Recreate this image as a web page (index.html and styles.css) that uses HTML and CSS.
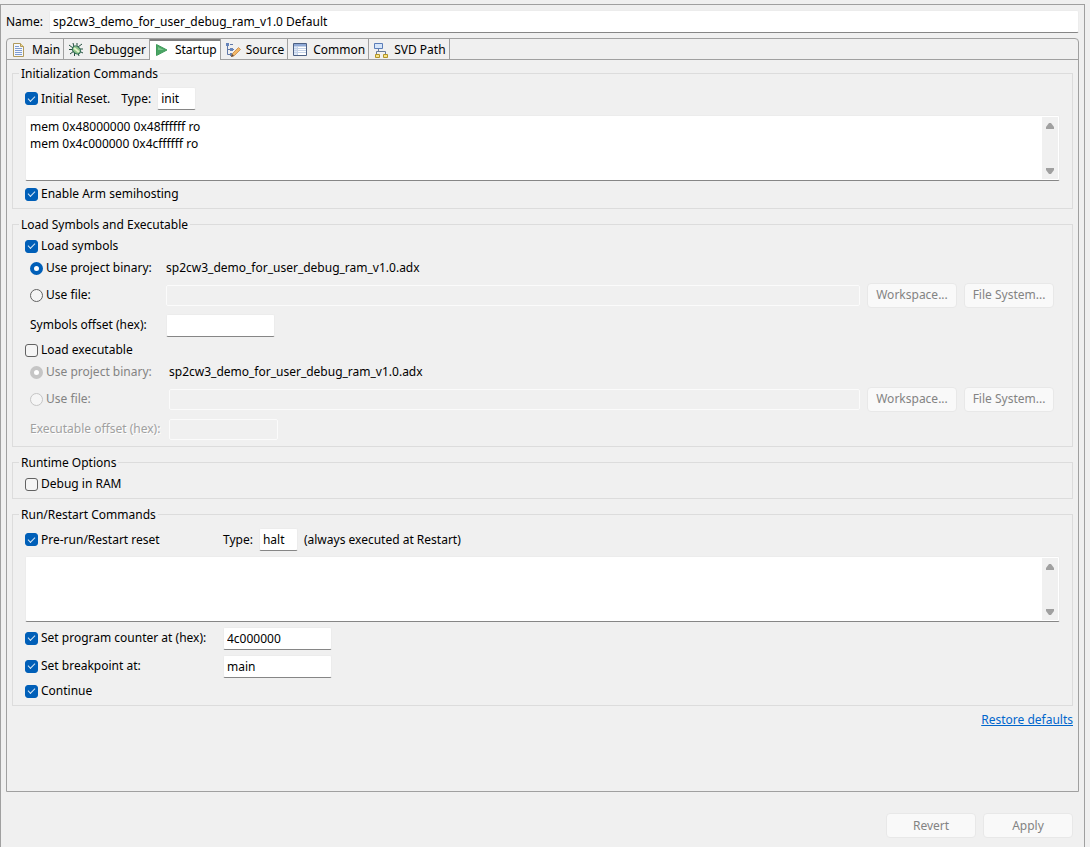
FILE: index.html
```html
<!DOCTYPE html>
<html lang="en">
<head>
    <meta charset="UTF-8">
    <meta name="viewport" content="width=device-width, initial-scale=1.0">
    <title>Debug Configuration</title>
    <link rel="stylesheet" href="styles.css">
</head>
<body>
    <main class="config">
        <div class="name-row">
            <label for="name">Name:</label>
            <input type="text" id="name" class="field" value="sp2cw3_demo_for_user_debug_ram_v1.0 Default">
        </div>

        <div class="folder">
            <div class="tabs" role="tablist">
                <button class="tab" role="tab">
                    <svg width="16" height="16" viewBox="0 0 16 16">
                        <path d="M2.5 1.5h7l3 3v10h-10z" fill="#f4f8ff" stroke="#b09a5c"/>
                        <path d="M9.5 1.5v3h3" fill="#f0d88c" stroke="#b09a5c"/>
                        <path d="M4 4.5h4M4 6.5h7M4 8.5h7M4 10.5h7M4 12.5h7" stroke="#7f9cd0"/>
                    </svg>
                    Main
                </button>
                <button class="tab" role="tab">
                    <svg width="16" height="16" viewBox="0 0 16 16">
                        <path d="M5 1l1 4M9 1v4M1 3l4 3M1 7.500h4M2 12l4-3M6.500 10v4M10 11l1 3M11 9l4 2M11 7h4M10 5l4-3" fill="none" stroke="#24503f"/>
                        <ellipse cx="8.500" cy="8" rx="4.500" ry="3.500" transform="rotate(40 8.500 8)" fill="#8fc58a" stroke="#2c6653"/>
                        <path d="M6 6l5 4" stroke="#e4f5cf" stroke-width="2"/>
                    </svg>
                    Debugger
                </button>
                <button class="tab active" role="tab" aria-selected="true">
                    <svg width="16" height="16" viewBox="0 0 16 16">
                        <path d="M2.5 2.5L13 8L2.5 13.5z" fill="#4aa564" stroke="#3f9a5a"/>
                        <path d="M4 5l6 3H4z" fill="#7cc48c"/>
                    </svg>
                    Startup
                </button>
                <button class="tab" role="tab">
                    <svg width="16" height="16" viewBox="0 0 16 16">
                        <path d="M2.5 3v9.500H6M2.5 7.500H6M5 2.500h3M8 7.500h1" fill="none" stroke="#6078a8"/>
                        <path d="M1 1h3v3H1zM5 6h3v3H5zM5 11h3v3H5z" fill="#6483ba"/>
                        <path d="M6.5 14.500l1-3l6-6l2 2l-6 6z" fill="#f2b868" stroke="#cf9558"/>
                        <path d="M6 15l1-3l2 2z" fill="#5c4a3c"/>
                    </svg>
                    Source
                </button>
                <button class="tab" role="tab">
                    <svg width="16" height="16" viewBox="0 0 16 16">
                        <path d="M1.5 1.5h13v12h-13z" fill="#fff" stroke="#4d6185"/>
                        <path d="M2 2h12v2H2z" fill="#8fa9d6"/>
                        <path d="M2 4h3v9H2z" fill="#dce7f7"/>
                        <path d="M2 4.5h12M5.5 4v9M2 6.5h12M2 8.5h12M2 10.5h12" stroke="#c4d2e8"/>
                    </svg>
                    Common
                </button>
                <button class="tab" role="tab">
                    <svg width="16" height="16" viewBox="0 0 16 16">
                        <path d="M5.5 6v3.500M3.5 12V9.5h9V12" fill="none" stroke="#6b7c99"/>
                        <path d="M1.5 1.5h8v5h-8z" fill="#d5e5fa" stroke="#5b7db8"/>
                        <path d="M2.5 12.5h4v3h-4zM10.5 12.5h4v3h-4z" fill="#f6e488" stroke="#b39325"/>
                    </svg>
                    SVD Path
                </button>
            </div>

            <div class="page">
                <fieldset class="group">
                    <legend>Initialization Commands</legend>
                    <div class="row">
                        <label class="check"><input type="checkbox" checked>Initial Reset.</label>
                        <label for="init-type" class="type-label">Type:</label>
                        <input type="text" id="init-type" class="field tiny" value="init">
                    </div>
                    <div class="commands">
                        <textarea aria-label="Initialization commands">mem 0x48000000 0x48ffffff ro
mem 0x4c000000 0x4cffffff ro</textarea>
                        <div class="scroll">
                            <svg width="8" height="6" viewBox="0 0 8 6"><path d="M3 0h2l3 4v2H0V4z"/></svg>
                            <svg width="8" height="6" viewBox="0 0 8 6"><path d="M0 0h8v2L5 6H3L0 2z"/></svg>
                        </div>
                    </div>
                    <label class="check semihosting"><input type="checkbox" checked>Enable Arm semihosting</label>
                </fieldset>

                <fieldset class="group">
                    <legend>Load Symbols and Executable</legend>
                    <label class="check"><input type="checkbox" checked>Load symbols</label>
                    <div class="grid">
                        <label class="check"><input type="radio" name="symbols" checked>Use project binary:</label>
                        <span class="wide">sp2cw3_demo_for_user_debug_ram_v1.0.adx</span>
                        <label class="check"><input type="radio" name="symbols">Use file:</label>
                        <input type="text" class="field" aria-label="Symbols file" disabled>
                        <button class="btn" disabled>Workspace...</button>
                        <button class="btn" disabled>File System...</button>
                        <label for="sym-offset">Symbols offset (hex):</label>
                        <input type="text" id="sym-offset" class="field short">
                    </div>
                    <label class="check"><input type="checkbox">Load executable</label>
                    <div class="grid executable">
                        <label class="check disabled"><input type="radio" name="executable" checked disabled>Use project binary:</label>
                        <span class="wide">sp2cw3_demo_for_user_debug_ram_v1.0.adx</span>
                        <label class="check disabled"><input type="radio" name="executable" disabled>Use file:</label>
                        <input type="text" class="field" aria-label="Executable file" disabled>
                        <button class="btn" disabled>Workspace...</button>
                        <button class="btn" disabled>File System...</button>
                        <label for="exe-offset" class="etched">Executable offset (hex):</label>
                        <input type="text" id="exe-offset" class="field short" disabled>
                    </div>
                </fieldset>

                <fieldset class="group">
                    <legend>Runtime Options</legend>
                    <label class="check"><input type="checkbox">Debug in RAM</label>
                </fieldset>

                <fieldset class="group">
                    <legend>Run/Restart Commands</legend>
                    <div class="row">
                        <label class="check run-label"><input type="checkbox" checked>Pre-run/Restart reset</label>
                        <label for="run-type">Type:</label>
                        <input type="text" id="run-type" class="field tiny" value="halt">
                        <span>(always executed at Restart)</span>
                    </div>
                    <div class="commands">
                        <textarea aria-label="Run commands"></textarea>
                        <div class="scroll">
                            <svg width="8" height="6" viewBox="0 0 8 6"><path d="M3 0h2l3 4v2H0V4z"/></svg>
                            <svg width="8" height="6" viewBox="0 0 8 6"><path d="M0 0h8v2L5 6H3L0 2z"/></svg>
                        </div>
                    </div>
                    <div class="row option">
                        <label class="check run-label"><input type="checkbox" checked>Set program counter at (hex):</label>
                        <input type="text" class="field short" aria-label="Program counter" value="4c000000">
                    </div>
                    <div class="row option">
                        <label class="check run-label"><input type="checkbox" checked>Set breakpoint at:</label>
                        <input type="text" class="field short" aria-label="Breakpoint" value="main">
                    </div>
                    <label class="check"><input type="checkbox" checked>Continue</label>
                </fieldset>

                <a href="#" class="restore">Restore defaults</a>
            </div>
        </div>

        <div class="actions">
            <button class="btn" disabled>Revert</button>
            <button class="btn" disabled>Apply</button>
        </div>
    </main>
</body>
</html>
```
FILE: styles.css
```css
* {
    box-sizing: border-box;
}

body {
    margin: 0;
    padding: 4px 5px 0 0;
    min-height: 100vh;
    display: flex;
    background: #f0f0f0;
    color: #000;
    font-family: "Noto Sans", "Open Sans", sans-serif;
    font-size: 12px;
    line-height: 16px;
}

input, button, textarea {
    font: inherit;
    color: inherit;
    margin: 0;
}

.config {
    flex: 1;
    min-width: 0;
    display: flex;
    flex-direction: column;
    padding: 5px 5px 9px;
    border: 1px solid #a0a0a0;
    border-bottom: none;
}

.name-row {
    display: flex;
    align-items: center;
    gap: 6px;
}

.name-row .field {
    flex: 1;
}

.field {
    height: 23px;
    min-width: 0;
    padding: 0 3px;
    background: #fff;
    border: 1px solid #ececec;
    border-bottom-color: #868686;
    border-radius: 2px;
    outline: none;
}

.field:disabled {
    height: 21px;
    background: #f0f0f0;
    border-color: #fbfbfb;
}

.tiny {
    width: 39px;
}

.short {
    width: 109px;
}

.folder {
    flex: 1;
    display: flex;
    flex-direction: column;
    margin-top: 5px;
    border: 1px solid #a0a0a0;
    border-radius: 4px 4px 0 0;
}

.tabs {
    display: flex;
    height: 21px;
    border-bottom: 1px solid #a0a0a0;
}

.tab {
    display: flex;
    align-items: center;
    gap: 5px;
    height: 20px;
    padding: 2px 3px 0 4px;
    background: none;
    border: none;
    border-right: 1px solid #a0a0a0;
    white-space: nowrap;
}

.tab.active {
    height: 21px;
    padding-bottom: 1px;
    background: #fff;
    box-shadow: inset 0 2px #808080;
}

.page {
    flex: 1;
    display: flex;
    flex-direction: column;
    padding: 4px 5px 5px;
}

.group {
    margin: 0 0 6px;
    padding: 2px 12px 3px;
    border: 1px solid #dcdcdc;
    min-width: 0;
}

.group legend {
    margin-left: -6px;
    padding: 2px 2px 0;
}

.row {
    display: flex;
    align-items: center;
    gap: 6px;
    padding-top: 3px;
}

.check {
    display: flex;
    align-items: center;
    gap: 3px;
    height: 22px;
    white-space: nowrap;
}

.check input {
    appearance: none;
    flex: none;
    width: 13px;
    height: 13px;
    background: #f5f5f5;
    border: 1px solid #626262;
    border-radius: 3px;
}

.check input[type="checkbox"]:checked {
    background: #005fb8;
    border-color: #005fb8;
    display: grid;
    place-items: center;
}

.check input[type="checkbox"]:checked::after {
    content: "";
    width: 6px;
    height: 3px;
    margin-bottom: 2px;
    border: solid #d5e6f5;
    border-width: 0 0 1px 1px;
    transform: rotate(-45deg);
}

.check input[type="radio"] {
    border-radius: 50%;
}

.check input[type="radio"]:checked {
    background: #fff;
    border: 4px solid #005fb8;
}

.check input[type="radio"]:disabled {
    border-color: #c5c5c5;
}

.disabled {
    color: #838383;
}

.etched {
    color: #a0a0a0;
    text-shadow: 1px 1px #fff;
}

.type-label {
    margin-left: 5px;
}

.commands {
    display: flex;
    height: 66px;
    margin: 5px 0 2px;
    background: #fff;
    border: 1px solid #ececec;
    border-bottom-color: #868686;
    border-radius: 2px;
}

.commands textarea {
    flex: 1;
    min-width: 0;
    padding: 2px 4px;
    background: none;
    border: none;
    outline: none;
    resize: none;
    line-height: 17px;
}

.scroll {
    display: flex;
    flex-direction: column;
    justify-content: space-between;
    align-items: center;
    width: 16px;
    margin: 1px 1px 1px 0;
    padding: 6px 0 5px;
    background: #f0f0f0;
    fill: #a0a0a0;
}

.semihosting {
    margin-top: 1px;
}

.grid {
    display: grid;
    grid-template-columns: 129px 1fr 90px 90px;
    grid-template-rows: 22px 32px 28px;
    align-items: center;
    column-gap: 7px;
    padding: 0 6px 0 5px;
}

.grid.executable {
    grid-template-columns: 132px 1fr 90px 90px;
}

.wide {
    grid-column: 2 / -1;
}

.btn {
    width: 90px;
    height: 25px;
    padding: 0;
    background: #f9f9f9;
    border: 1px solid #e8e8e8;
    border-radius: 4px;
}

.btn:disabled {
    color: #838383;
}

.run-label {
    width: 192px;
}

.option {
    height: 28px;
    padding: 0;
}

.restore {
    align-self: flex-end;
    color: #0066cc;
}

.actions {
    display: flex;
    justify-content: flex-end;
    gap: 7px;
    padding: 21px 6px 0 0;
}
```
